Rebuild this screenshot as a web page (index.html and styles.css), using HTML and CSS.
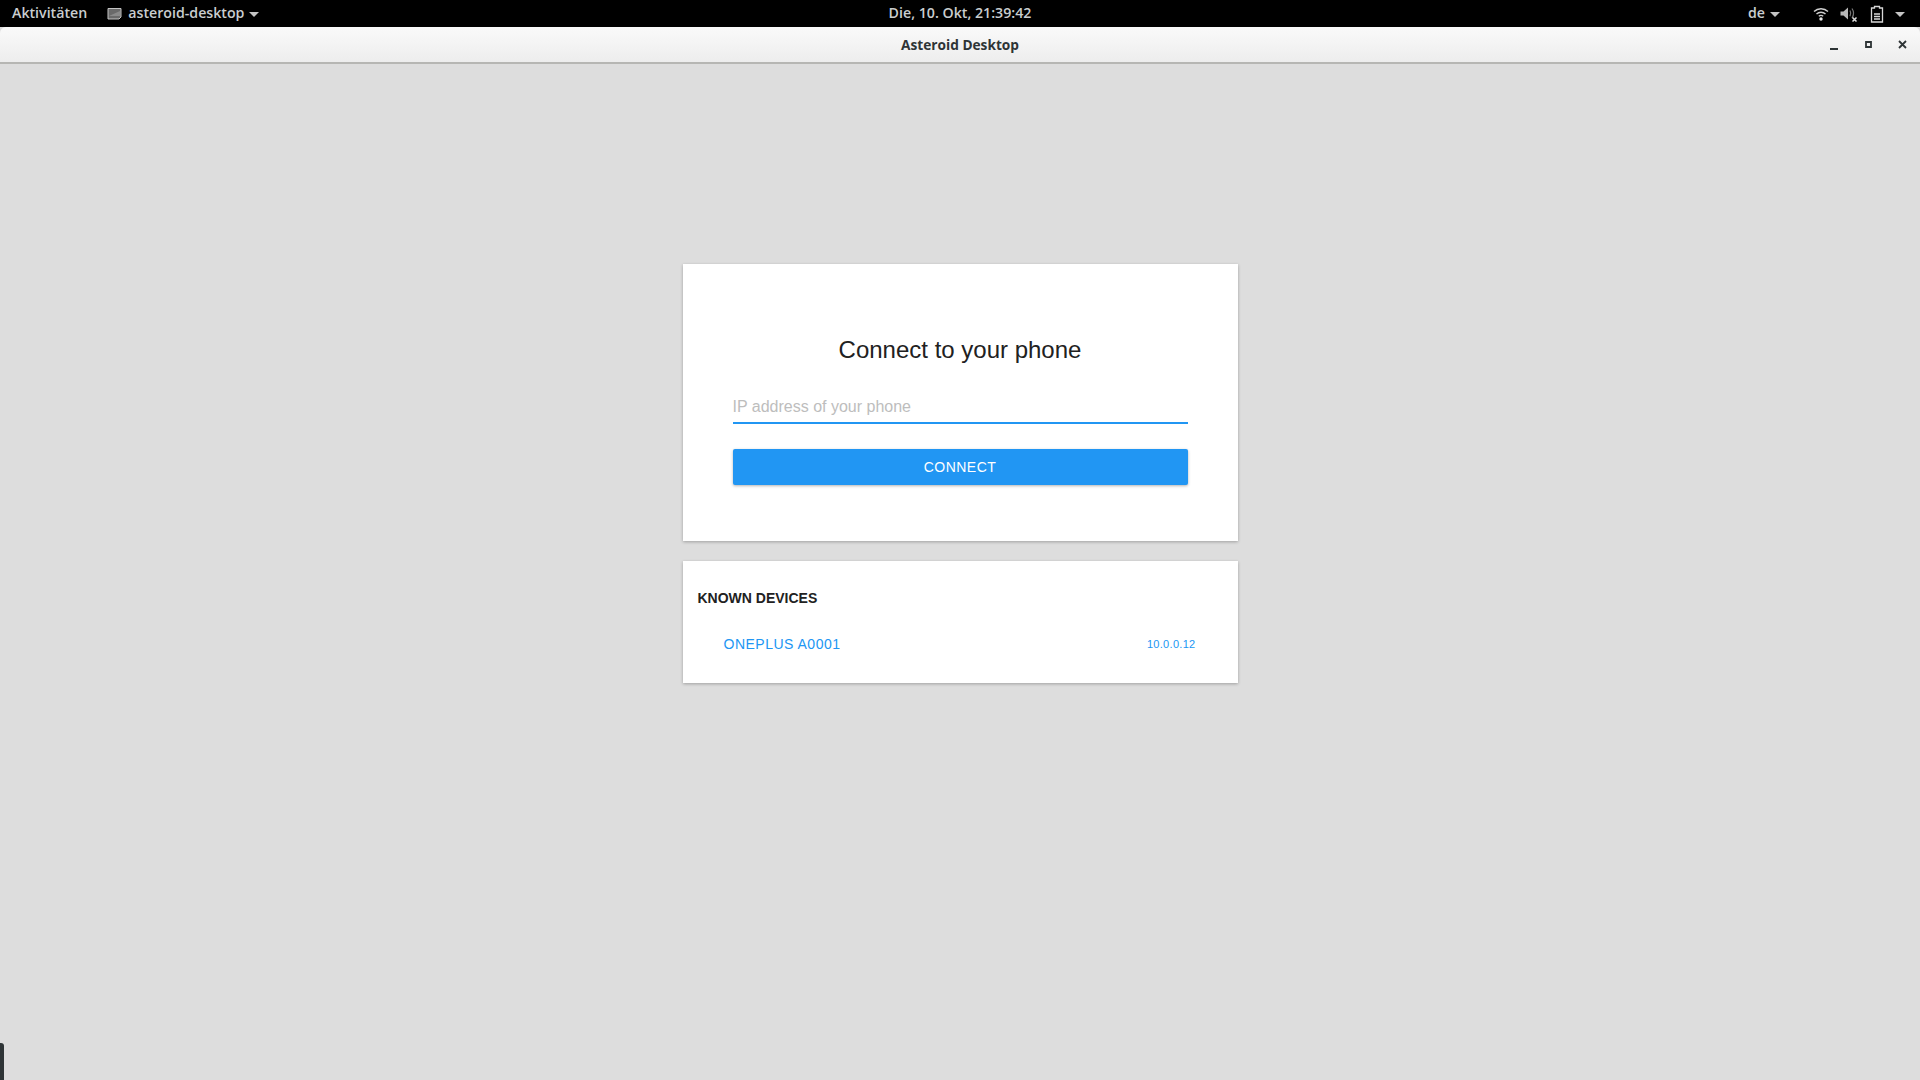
FILE: index.html
```html
<!DOCTYPE html>
<html lang="de">
<head>
<meta charset="utf-8">
<title>Asteroid Desktop</title>
<link rel="stylesheet" href="styles.css">
</head>
<body>
<header class="topbar">
  <div class="top-left">
    <span class="top-text activities">Aktivitäten</span>
    <span class="appmenu">
      <svg class="appicon" width="15" height="13" viewBox="0 0 15 13"><path d="M1 1.500h13v8.500l-2 2H1z" fill="#6a6a6a" stroke="#c4c4c4" stroke-width="1"/><path d="M2 9L13 4v5H2z" fill="#8a8a8a"/></svg>
      <span class="top-text">asteroid-desktop</span>
      <span class="caret"></span>
    </span>
  </div>
  <div class="clock top-text">Die, 10. Okt, 21:39:42</div>
  <div class="top-right">
    <span class="lang"><span class="top-text">de</span><span class="caret"></span></span>
    <span class="tray">
      <svg class="wifi" width="16" height="16" viewBox="0 0 16 16" fill="none" stroke="#d0d0d0"><path d="M1 5.500C4.800 1.800 11.200 1.800 15 5.500" stroke-width="1.400"/><path d="M3.500 8C6 5.700 10 5.700 12.500 8" stroke-width="1.400"/><path d="M5.800 10.300C7 9.300 9 9.300 10.200 10.300" stroke-width="1.400"/><circle cx="8" cy="13" r="1.700" fill="#e8e8e8" stroke="none"/></svg>
      <svg width="18" height="16" viewBox="0 0 18 16" fill="none"><path d="M0.500 5.500h3L8 1.500v12l-4.500-4h-3z" fill="#b8b8b8"/><path d="M10 4.500c1 1.800 1 4 0 5.800M12 2.500c2 3 2 6.500 0 9.500" stroke="#777" stroke-width="1.200"/><path d="M12.500 11.500l4 4M16.500 11.500l-4 4" stroke="#e0e0e0" stroke-width="1.500"/></svg>
      <svg class="battery" width="14" height="18" viewBox="0 0 14 18" fill="none"><path d="M4.500 1.500h5v1.500h3v14h-11V3h3z" stroke="#d8d8d8" stroke-width="1.300"/><path d="M4 9h6M4 11.500h6M4 14h6" stroke="#d8d8d8" stroke-width="1.500"/></svg>
      <span class="caret"></span>
    </span>
  </div>
</header>
<div class="titlebar">
  <div class="title">Asteroid Desktop</div>
  <div class="winctl">
    <svg width="10" height="10" viewBox="0 0 10 10"><path d="M1 8h8v2H1z" fill="#2e3436"/></svg>
    <svg width="7" height="7" viewBox="0 0 7 7"><path d="M1 1h5v5H1z" fill="none" stroke="#2e3436" stroke-width="1.800"/></svg>
    <svg width="9" height="9" viewBox="0 0 9 9"><path d="M1 1l7 7M8 1l-7 7" stroke="#2e3436" stroke-width="1.800"/></svg>
  </div>
</div>
<main class="content">
  <section class="card connect">
    <h1 class="heading">Connect to your phone</h1>
    <div class="field">IP address of your phone</div>
    <button class="btn">CONNECT</button>
  </section>
  <section class="card known">
    <h2 class="subheading">KNOWN DEVICES</h2>
    <div class="device">
      <span class="device-name">ONEPLUS A0001</span>
      <span class="device-ip">10.0.0.12</span>
    </div>
  </section>
</main>
<div class="dock-edge"></div>
</body>
</html>
```
FILE: styles.css
```css
* { box-sizing: border-box; }
body {
  margin: 0;
  height: 1080px;
  overflow: hidden;
  display: flex;
  flex-direction: column;
  background: #dddddd;
  font-family: "Liberation Sans", Arial, sans-serif;
  position: relative;
}
.topbar {
  height: 27px;
  flex: none;
  background: #000;
  display: grid;
  grid-template-columns: 1fr auto 1fr;
  align-items: center;
  padding: 0 12px;
}
.top-text {
  font-family: "Open Sans", "Noto Sans", sans-serif;
  font-size: 14.200px;
  font-weight: 600;
  color: #c9cdcf;
  line-height: 25px;
  height: 27px;
  white-space: nowrap;
}
.top-left { display: flex; align-items: center; gap: 20px; }
.appmenu { display: flex; align-items: center; }
.appicon { margin-right: 6px; }
.caret {
  display: inline-block;
  width: 0; height: 0;
  border-left: 5px solid transparent;
  border-right: 5px solid transparent;
  border-top: 5px solid #c4c4c4;
  margin-left: 5px;
  margin-top: 1px;
}
.clock { text-align: center; }
.top-right { display: flex; justify-content: flex-end; align-items: center; }
.lang { display: flex; align-items: center; margin-right: 33px; }
.tray { display: flex; align-items: center; gap: 11px; margin-right: 3px; }
.tray .caret { margin-left: 0; }
.battery { margin-left: 1px; }
.titlebar {
  height: 37px;
  flex: none;
  position: relative;
  background: linear-gradient(#fafafa, #ededed);
  border-bottom: 2px solid #b6b6b3;
  border-radius: 6px 6px 0 0;
  display: flex;
  align-items: center;
  justify-content: center;
}
.title {
  font-family: "Open Sans", "Noto Sans", sans-serif;
  font-size: 13.700px;
  font-weight: 700;
  color: #2e3436;
}
.winctl {
  position: absolute;
  right: 13px;
  top: 0;
  bottom: 0;
  display: flex;
  align-items: center;
  gap: 26px;
}
.content {
  flex: 1;
  display: flex;
  flex-direction: column;
  align-items: center;
  padding-top: 200px;
  gap: 20px;
}
.card {
  width: 555px;
  background: #fff;
  box-shadow: 0 1px 3px rgba(0,0,0,.28);
}
.connect {
  height: 277px;
  padding: 0 50px;
  display: flex;
  flex-direction: column;
}
.heading {
  margin: 71px 0 0;
  font-size: 24px;
  font-weight: 400;
  line-height: 30px;
  text-align: center;
  color: #212121;
}
.field {
  margin-top: 25px;
  height: 34px;
  line-height: 34px;
  font-size: 16px;
  color: #bdbdbd;
  border-bottom: 2px solid #2196f3;
}
.btn {
  margin-top: 25px;
  height: 36px;
  width: 100%;
  border: 0;
  border-radius: 2px;
  background: #2196f3;
  color: #fff;
  font-family: inherit;
  font-size: 14px;
  letter-spacing: .5px;
  box-shadow: 0 1px 3px rgba(0,0,0,.3);
}
.known {
  height: 122px;
  padding: 27px 15px 0;
}
.subheading {
  margin: 0;
  font-size: 14px;
  font-weight: 700;
  line-height: 20px;
  color: #212121;
}
.device {
  margin-top: 26px;
  padding: 0 27px 0 26px;
  display: flex;
  justify-content: space-between;
  align-items: center;
  color: #2196f3;
  line-height: 20px;
}
.device-name { font-size: 14px; letter-spacing: .5px; }
.device-ip { font-size: 11px; letter-spacing: .3px; }
.dock-edge {
  position: absolute;
  left: 0;
  bottom: 0;
  width: 4px;
  height: 37px;
  background: #2e3436;
  border-radius: 0 3px 0 0;
}
```
